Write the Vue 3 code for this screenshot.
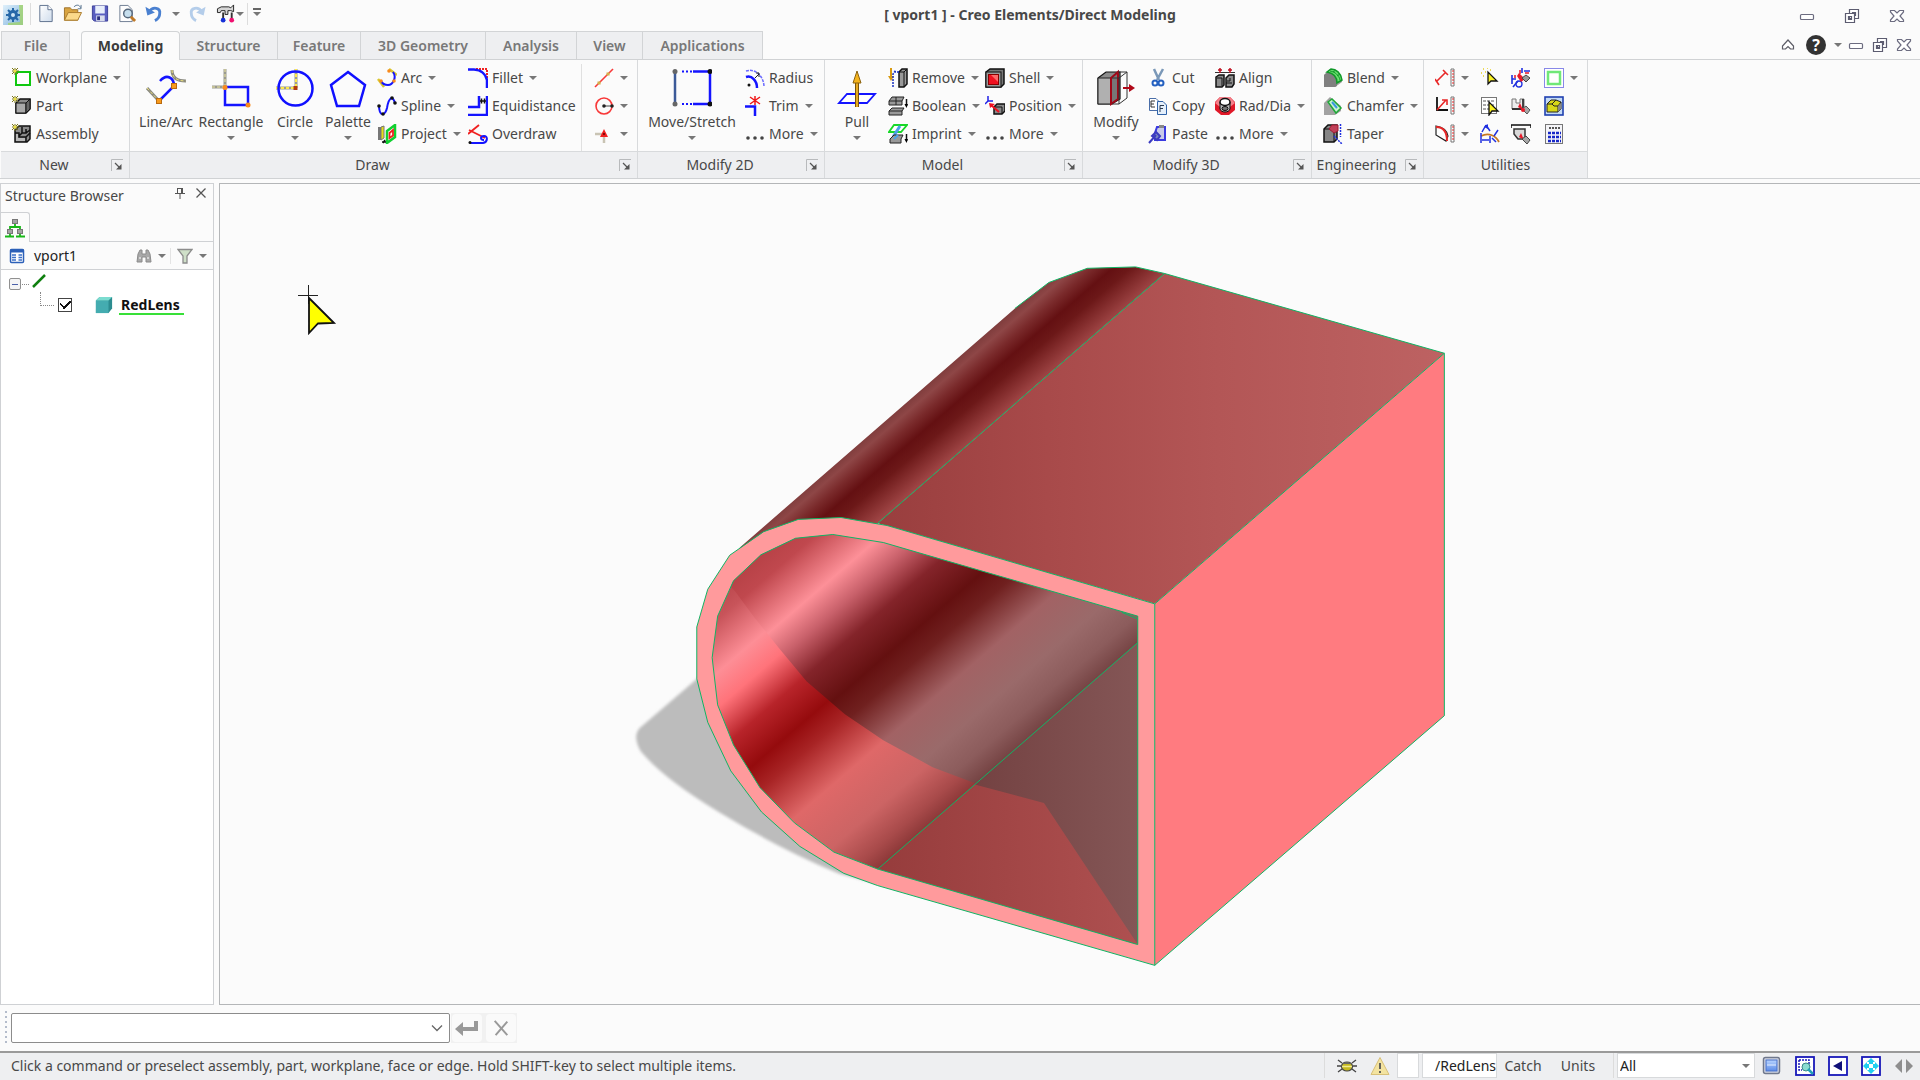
<script setup>
import { ref } from 'vue'

const tabs = ['Modeling', 'Structure', 'Feature', '3D Geometry', 'Analysis', 'View', 'Applications']
const activeTab = ref('Modeling')
const visible = ref(true)
const command = ref('')
const filter = ref('All')

const groups = [
  {
    id: 'new', label: 'New', launcher: true,
    parts: [
      { items: [
        { icon: 'workplane', text: 'Workplane', menu: true },
        { icon: 'part', text: 'Part' },
        { icon: 'assembly', text: 'Assembly' },
      ] },
    ],
  },
  {
    id: 'draw', label: 'Draw', launcher: true,
    parts: [
      { big: 'linearc', text: 'Line/Arc' },
      { big: 'rectangle', text: 'Rectangle', menu: true },
      { big: 'circle', text: 'Circle', menu: true },
      { big: 'palette', text: 'Palette', menu: true },
      { items: [
        { icon: 'arc', text: 'Arc', menu: true },
        { icon: 'spline', text: 'Spline', menu: true },
        { icon: 'project', text: 'Project', menu: true },
      ] },
      { items: [
        { icon: 'fillet', text: 'Fillet', menu: true },
        { icon: 'equi', text: 'Equidistance' },
        { icon: 'overdraw', text: 'Overdraw' },
      ] },
      { divided: true, items: [
        { icon: 'cline', name: 'Construction line', menu: true },
        { icon: 'ccircle', name: 'Construction circle', menu: true },
        { icon: 'cpoint', name: 'Construction point', menu: true },
      ] },
    ],
  },
  {
    id: 'mod2d', label: 'Modify 2D', launcher: true,
    parts: [
      { big: 'stretch', text: 'Move/Stretch', menu: true },
      { items: [
        { icon: 'radius', text: 'Radius' },
        { icon: 'trim', text: 'Trim', menu: true },
        { icon: 'more', text: 'More', menu: true },
      ] },
    ],
  },
  {
    id: 'model', label: 'Model', launcher: true,
    parts: [
      { big: 'pull', text: 'Pull', menu: true },
      { items: [
        { icon: 'remove', text: 'Remove', menu: true },
        { icon: 'boolean', text: 'Boolean', menu: true },
        { icon: 'imprint', text: 'Imprint', menu: true },
      ] },
      { items: [
        { icon: 'shell', text: 'Shell', menu: true },
        { icon: 'position', text: 'Position', menu: true },
        { icon: 'more', text: 'More', menu: true },
      ] },
    ],
  },
  {
    id: 'mod3d', label: 'Modify 3D', launcher: true,
    parts: [
      { big: 'modify', text: 'Modify', menu: true },
      { items: [
        { icon: 'cut', text: 'Cut' },
        { icon: 'copy', text: 'Copy' },
        { icon: 'paste', text: 'Paste' },
      ] },
      { items: [
        { icon: 'align', text: 'Align' },
        { icon: 'raddia', text: 'Rad/Dia', menu: true },
        { icon: 'more', text: 'More', menu: true },
      ] },
    ],
  },
  {
    id: 'eng', label: 'Engineering', launcher: true,
    parts: [
      { items: [
        { icon: 'blend', text: 'Blend', menu: true },
        { icon: 'chamfer', text: 'Chamfer', menu: true },
        { icon: 'taper', text: 'Taper' },
      ] },
    ],
  },
  {
    id: 'util', label: 'Utilities',
    parts: [
      { items: [
        { icon: 'mdist', name: 'Measure distance', menu: true },
        { icon: 'mangle', name: 'Measure angle', menu: true },
        { icon: 'mface', name: 'Measure face', menu: true },
      ] },
      { items: [
        { icon: 'select', name: 'Select' },
        { icon: 'selectlist', name: 'Select from list' },
        { icon: 'curvature', name: 'Curvature' },
      ] },
      { items: [
        { icon: 'check1', name: 'Check sketch' },
        { icon: 'check2', name: 'Check part' },
        { icon: 'check3', name: 'Check size' },
      ] },
      { items: [
        { icon: 'frame', name: 'Workplane display', menu: true },
        { icon: 'shaded', name: 'Shaded display' },
        { icon: 'calc', name: 'Calculator' },
      ] },
    ],
  },
]

const quick = [
  { icon: 'file', name: 'New' },
  { icon: 'open', name: 'Open' },
  { icon: 'save', name: 'Save' },
  { icon: 'preview', name: 'Preview' },
  { icon: 'undo', name: 'Undo', menu: true },
  { icon: 'redo', name: 'Redo' },
  { icon: 'hammer', name: 'Customize tools', menu: true },
]

const viewTools = [
  { icon: 'screen', name: 'Viewport' },
  { icon: 'zoomwin', name: 'Zoom window' },
  { icon: 'back', name: 'Previous view' },
  { icon: 'fit', name: 'Fit view' },
  { icon: 'split', name: 'Resize' },
]
</script>

<template>
  <div class="app">
    <svg class="sprite" aria-hidden="true">
      <defs>
        <linearGradient id="gBlue" x1="0" y1="0" x2="1" y2="1">
          <stop offset="0" stop-color="#dff0fb" /><stop offset="1" stop-color="#7fb2dd" />
        </linearGradient>
        <linearGradient id="gScreen" x1="0" y1="0" x2="0" y2="1">
          <stop offset="0" stop-color="#b8d4ff" /><stop offset="1" stop-color="#5b8be8" />
        </linearGradient>
        <linearGradient id="gPage" x1="0" y1="0" x2="1" y2="1">
          <stop offset="0" stop-color="#ffffff" /><stop offset="1" stop-color="#cfdcec" />
        </linearGradient>
      </defs>
      <symbol id="gear" viewBox="0 0 20 20">
        <path d="M0 0H20V20H0Z" fill="url(#gBlue)" /><path d="M16 0H20V20H5V18L17 17Z" fill="#a4d46c" opacity=".8" />
        <circle cx="10" cy="10" r="3.500" fill="#cfe6f6" stroke="#2668a8" stroke-width="3" />
        <path d="M10 3v3M10 14v3M3 10h3M14 10h3M5 5l2 2M13 13l2 2M15 5l-2 2M5 15l2-2" stroke="#2668a8" stroke-width="2" />
      </symbol>
      <symbol id="file" viewBox="0 0 20 20">
        <path d="M3.500 1.500H12L16.500 6V18.500H3.500Z" fill="url(#gPage)" stroke="#5c6f8c" /><path d="M12 1.500V6H16.500" fill="#fff" stroke="#5c6f8c" />
      </symbol>
      <symbol id="open" viewBox="0 0 20 20">
        <path d="M1 17V4H7L9 6H15V17Z" fill="#d9a441" stroke="#9c722a" /><path d="M1 17L5 9H19L15 17Z" fill="#fbd98a" stroke="#a9792b" />
        <path d="M11 3C14 0 17 1 18 4M18.500 1V5H15" fill="none" stroke="#5a7590" />
      </symbol>
      <symbol id="save" viewBox="0 0 20 20">
        <path d="M2 2H18V18H4L2 16Z" fill="#5a5ec0" stroke="#3a3e98" /><rect x="5" y="2" width="10" height="8" fill="#e8eefb" /><rect x="6" y="12" width="9" height="6" fill="#d8dcec" /><rect x="7" y="13" width="3" height="4" fill="#2c2f80" />
      </symbol>
      <symbol id="preview" viewBox="0 0 20 20">
        <path d="M2.500 1.500H11L15.500 6V18.500H2.500Z" fill="#fdfdfd" stroke="#6b7a90" /><circle cx="11" cy="10" r="4.500" fill="#bcd8ea" fill-opacity=".85" stroke="#55677c" stroke-width="1.500" /><path d="M14 13.500L18.500 18" stroke="#c07a28" stroke-width="3" />
      </symbol>
      <symbol id="undo" viewBox="0 0 20 20">
        <path d="M5 8C9 2 17 4 16 10C16 13 14 16 11 17.500" fill="none" stroke="#4a80d0" stroke-width="3" /><path d="M1 3L3 12L11 9Z" fill="#4a80d0" />
      </symbol>
      <symbol id="redo" viewBox="0 0 20 20">
        <path d="M15 8C11 2 3 4 4 10C4 13 6 16 9 17.500" fill="none" stroke="#b4cdea" stroke-width="3" /><path d="M19 3L17 12L9 9Z" fill="#b4cdea" />
      </symbol>
      <symbol id="hammer" viewBox="0 0 20 20">
        <path d="M1 5L5 3H13L15 4L18 1V8L15 7H12V11H9V7H5L4 9H1Z" fill="#d6d6d6" stroke="#222" /><path d="M7 9V15M16 9V15" stroke="#333" stroke-width="2" /><circle cx="7" cy="17" r="2.500" fill="#1530d8" /><circle cx="16" cy="17" r="2.500" fill="#f01070" />
      </symbol>

      <symbol id="workplane" viewBox="0 0 20 20">
        <rect x="4" y="4" width="14" height="13" fill="#fff" stroke="#10c810" stroke-width="2" /><path d="M3 0V7M0 3H7M0 0L6 6M6 0L0 6" stroke="#7a7418" /><circle cx="3" cy="3" r="1.500" fill="#ece040" />
      </symbol>
      <symbol id="part" viewBox="0 0 20 20">
        <path d="M4 7L8 3H18V13L14 17H4Z" fill="#8a8a8a" stroke="#111" stroke-width="1.500" /><path d="M4 7H14V17H4Z" fill="#a9a9a9" stroke="#111" /><path d="M14 7L18 3V13L14 17Z" fill="#666" stroke="#111" /><path d="M3 0V7M0 3H7M0 0L6 6M6 0L0 6" stroke="#7a7418" /><circle cx="3" cy="3" r="1.500" fill="#ece040" />
      </symbol>
      <symbol id="assembly" viewBox="0 0 20 20">
        <path d="M3 6L7 2H18V15L15 18H3Z" fill="#8a8a8a" stroke="#111" stroke-width="1.500" /><path d="M3 9H7V13H14V18M10 3V9H14V5M10 9L7 12M14 9L18 6M14 13L18 9" fill="none" stroke="#111" stroke-width="1.500" /><path d="M4 10H6V14H13V17H4Z" fill="#b8b8b8" /><path d="M3 0V7M0 3H7M0 0L6 6M6 0L0 6" stroke="#7a7418" /><circle cx="3" cy="3" r="1.500" fill="#ece040" />
      </symbol>
      <symbol id="linearc" viewBox="0 0 40 40">
        <path d="M1 20L13 33M26 2C26 9 30 13 40 13" fill="none" stroke="#8a8a80" stroke-width="3" /><path d="M1 20L13 33M26 2C26 9 30 13 40 13" fill="none" stroke="#efe27a" stroke-dasharray="3 2" /><path d="M13 33L28 18C28 10 21 5 14 13" fill="none" stroke="#1414ff" stroke-width="2.500" /><rect x="10.500" y="30.500" width="5" height="5" fill="#f79a1c" stroke="#b96a10" /><rect x="25.500" y="15.500" width="5" height="5" fill="#f79a1c" stroke="#b96a10" />
      </symbol>
      <symbol id="rectangle" viewBox="0 0 40 40">
        <path d="M14 1V19M1 19H14" stroke="#9a9a90" stroke-width="3" /><path d="M14 1V19M1 19H14" stroke="#efe9a0" stroke-dasharray="3 2" /><rect x="14" y="19" width="23" height="18" fill="none" stroke="#1414ff" stroke-width="2.500" /><circle cx="14" cy="19.500" r="2.500" fill="#f98a1c" /><circle cx="37" cy="37" r="2.500" fill="#f98a1c" />
      </symbol>
      <symbol id="circle" viewBox="0 0 40 40">
        <path d="M21 1V20M1 20H21" stroke="#9a9a90" stroke-width="3" /><path d="M21 1V20M1 20H21" stroke="#ffe94a" stroke-width="2" stroke-dasharray="3 2" /><circle cx="20.500" cy="20.500" r="17" fill="none" stroke="#1010ff" stroke-width="2.500" /><rect x="18.500" y="18" width="4" height="4" fill="#b03a10" />
      </symbol>
      <symbol id="palette" viewBox="0 0 40 40">
        <path d="M20 4L37 17L31 38H9L3 17Z" fill="none" stroke="#1010ff" stroke-width="2.500" />
      </symbol>
      <symbol id="arc" viewBox="0 0 20 20">
        <path d="M12 1L20 7M1 11L7 19" stroke="#d8c830" stroke-width="2.500" /><path d="M16 4C20 9 16 17 11 17C7 17 5 15 4 13" fill="none" stroke="#1414ff" stroke-width="2" /><g fill="#f98a1c"><circle cx="12" cy="3" r="1.800" /><circle cx="4" cy="13" r="1.800" /><circle cx="17" cy="13" r="1.800" /></g>
      </symbol>
      <symbol id="spline" viewBox="0 0 20 20">
        <path d="M2 9C2 21 8 20 10 12C12 0 16 0 18 7" fill="none" stroke="#1414ff" stroke-width="2" /><g fill="#111"><circle cx="2" cy="10" r="1.800" /><circle cx="6" cy="18" r="1.800" /><circle cx="15" cy="2" r="1.800" /><circle cx="18" cy="7" r="1.800" /></g>
      </symbol>
      <symbol id="project" viewBox="0 0 20 20">
        <path d="M1 3H4V16H1Z" fill="#777" /><path d="M4 3L7 2V14L4 16Z" fill="#e6dd18" stroke="#777" /><path d="M10 7L18 1V13L10 19Z" fill="#fff" stroke="#10d030" stroke-width="2.500" /><path d="M12.500 9L16 6V11.500L12.500 14Z" fill="none" stroke="#f02020" stroke-width="1.800" /><path d="M5 18H9M8 16L6 19" stroke="#111" stroke-width="1.500" />
      </symbol>
      <symbol id="fillet" viewBox="0 0 20 20">
        <path d="M8 1H19V11" fill="none" stroke="#f02020" stroke-width="2" stroke-dasharray="2 1" /><path d="M0 1.500H6C14 2 18 7 19 12V20" fill="none" stroke="#1414ff" stroke-width="2.500" />
      </symbol>
      <symbol id="equi" viewBox="0 0 20 20">
        <path d="M0 11H11V0M0 19H19V0" fill="none" stroke="#1414ff" stroke-width="2.500" /><path d="M12 5H18M13.500 2.500V7.500M16.500 2.500V7.500" stroke="#111" stroke-width="1.500" />
      </symbol>
      <symbol id="overdraw" viewBox="0 0 20 20">
        <path d="M0 10L11 1M1 6L17 14" stroke="#f02020" stroke-width="1.800" /><path d="M2 19H15C20 18 20 12 16 12C12 12 12 16 16 16" fill="none" stroke="#1414ff" stroke-width="2" /><circle cx="2" cy="18.500" r="1.500" fill="#111" />
      </symbol>
      <symbol id="cline" viewBox="0 0 20 20">
        <path d="M1 19L19 1" stroke="#f83838" stroke-width="1.600" /><path d="M5 15h.1M14 6h.1" stroke="#d2b04a" stroke-width="3" stroke-linecap="square" />
      </symbol>
      <symbol id="ccircle" viewBox="0 0 20 20">
        <circle cx="10" cy="10" r="8" fill="none" stroke="#f83838" stroke-width="1.600" /><path d="M10 10H18" stroke="#444" /><circle cx="10" cy="10" r="1.800" fill="#222" /><circle cx="18" cy="10" r="1.800" fill="#222" />
      </symbol>
      <symbol id="cpoint" viewBox="0 0 20 20">
        <path d="M1 10H10V19" fill="none" stroke="#c9c4b4" stroke-width="2.500" /><path d="M10 5L14 13H6Z" fill="#f02020" /><circle cx="10" cy="10" r="1" fill="#600" />
      </symbol>
      <symbol id="stretch" viewBox="0 0 40 40">
        <path d="M3 4V36" stroke="#3c5a98" stroke-width="2.500" /><path d="M10 3.500H22M10 36H22" stroke="#1414ff" stroke-width="2" stroke-dasharray="2 2" /><path d="M21 3.500H38V36H21" fill="none" stroke="#1414ff" stroke-width="2.500" /><circle cx="3" cy="3.500" r="2.500" fill="#666" /><circle cx="3" cy="36" r="2.500" fill="#666" /><circle cx="38" cy="3.500" r="2.500" fill="#111" /><circle cx="38" cy="36" r="2.500" fill="#111" />
      </symbol>
      <symbol id="radius" viewBox="0 0 20 20">
        <path d="M1 3C10 0 19 8 19 19" fill="none" stroke="#6a6aff" stroke-width="1.500" stroke-dasharray="3 1" /><path d="M1 9C7 7 12 13 12 20" fill="none" stroke="#1414ff" stroke-width="2.500" /><circle cx="4" cy="17" r="1.500" fill="#111" /><path d="M10 10L14 6M14 9V5H11" stroke="#222" fill="none" />
      </symbol>
      <symbol id="trim" viewBox="0 0 20 20">
        <path d="M0 10.500H10V20" fill="none" stroke="#1414ff" stroke-width="2.500" /><path d="M10 0V9M5 1L15 8M15 1L5 8" stroke="#f01818" stroke-width="1.500" />
      </symbol>
      <symbol id="more" viewBox="0 0 20 20">
        <g fill="#444"><circle cx="3" cy="14" r="1.800" /><circle cx="10" cy="14" r="1.800" /><circle cx="17" cy="14" r="1.800" /></g>
      </symbol>
      <symbol id="pull" viewBox="0 0 40 40">
        <path d="M10 26H38L30 35H2Z" fill="#fff" stroke="#1414ff" stroke-width="1.800" /><path d="M20 14V39" stroke="#7a5408" stroke-width="4" /><path d="M20 14V39" stroke="#e8aa20" stroke-width="2" /><path d="M20 3L24 15H16Z" fill="#f5b41c" stroke="#8a6210" />
      </symbol>
      <symbol id="remove" viewBox="0 0 20 20">
        <path d="M3 0V11" stroke="#d89a10" stroke-width="2" /><path d="M0 8H6L3 13Z" fill="#d89a10" /><path d="M11 4L14 1H19V16L16 19H11Z" fill="#999" stroke="#111" stroke-width="1.500" /><path d="M11 4H16V19M16 4L19 1" fill="none" stroke="#111" /><path d="M5 19V6L8 2M11 4H6" stroke="#1830c0" fill="none" stroke-dasharray="2 1" stroke-width="1.500" />
      </symbol>
      <symbol id="boolean" viewBox="0 0 20 20">
        <path d="M1 5L4 1H16L14 5V9H1Z" fill="#999" stroke="#222" /><path d="M1 5H14M8 1V9" stroke="#222" /><path d="M1 15L4 12H16L14 15V19H1Z" fill="#999" stroke="#222" /><path d="M1 15H14" stroke="#222" /><path d="M18.500 3V10" stroke="#111" stroke-width="1.500" /><path d="M16.500 8H20L18.500 12Z" />
      </symbol>
      <symbol id="imprint" viewBox="0 0 20 20">
        <path d="M6 1H19L13 8H1Z" fill="#fff" stroke="#18d828" stroke-width="1.800" /><path d="M12 2L5 13" stroke="#4aa0e8" stroke-width="3" /><path d="M2 15L6 11H15L13 15V19H2Z" fill="#999" stroke="#222" /><path d="M10 11L6 15" stroke="#4aa0e8" stroke-width="2" /><path d="M18.500 10V17" stroke="#111" stroke-width="1.500" /><path d="M16.500 15H20L18.500 19Z" />
      </symbol>
      <symbol id="shell" viewBox="0 0 20 20">
        <path d="M1 4L5 1H19V16L16 19H1Z" fill="#777" stroke="#111" stroke-width="1.500" /><rect x="1" y="4" width="15" height="15" fill="#9a9a9a" stroke="#111" /><rect x="3.500" y="6.500" width="10" height="10" fill="#f01020" stroke="#800" /><path d="M6 7H13V14Z" fill="#ff6868" />
      </symbol>
      <symbol id="position" viewBox="0 0 20 20">
        <path d="M3 0V5L0 8M3 5H8" fill="none" stroke="#2020e8" stroke-width="1.500" /><path d="M9 11L12 8H20V15L17 18H9Z" fill="#888" stroke="#111" stroke-width="1.500" /><path d="M9 11H17V18" fill="none" stroke="#111" /><path d="M14 16L6 9" stroke="#f01020" stroke-width="2" /><path d="M4 7L10 8L5 12Z" fill="#f01020" />
      </symbol>
      <symbol id="modify" viewBox="0 0 40 40">
        <path d="M2 10L10 4H24V31L16 36H2Z" fill="#8c8c8c" stroke="#111" stroke-width="1.200" /><path d="M2 10H15V36H2Z" fill="#b0b0b0" stroke="#222" /><path d="M15 10L22 4V31L15 36Z" fill="#777" stroke="#a00818" stroke-width="2" /><path d="M16 10H23L31 4V30L23 36H16M23 10V36M22 4H31" fill="none" stroke="#333" /><path d="M27 20H35" stroke="#b00818" stroke-width="2" /><path d="M33 16L39 20L33 24Z" fill="#b00818" />
      </symbol>
      <symbol id="cut" viewBox="0 0 20 20">
        <path d="M6 1L11 12M15 1L9 12" stroke="#7a98b8" stroke-width="2.500" /><circle cx="7" cy="15" r="2.500" fill="none" stroke="#2460c0" stroke-width="2" /><circle cx="13" cy="15" r="2.500" fill="none" stroke="#2460c0" stroke-width="2" />
      </symbol>
      <symbol id="copy" viewBox="0 0 20 20">
        <path d="M1.500 2.500H8L10.500 5V14.500H1.500Z" fill="#fff" stroke="#4a6ea8" /><path d="M3 5H7M3 8H6M3 5V11H7" stroke="#333" fill="none" /><path d="M9.500 5.500H15L18.500 9V18.500H9.500Z" fill="#e4effb" stroke="#2f62a8" /><path d="M12 9.500H16M12 12.500H15M12 9.500V16" stroke="#2a3a50" fill="none" />
      </symbol>
      <symbol id="paste" viewBox="0 0 20 20">
        <path d="M9 3H17V16H7V9Z" fill="#c9cbe8" stroke="#3a3ae0" stroke-width="2" /><rect x="11" y="1" width="5" height="3" fill="#888" /><path d="M1 19L8 11M4 12L8 8L12 12L9 16Z" stroke="#3a3ac0" stroke-width="2" fill="#7a88c0" />
      </symbol>
      <symbol id="align" viewBox="0 0 20 20">
        <path d="M0 4.500H20" stroke="#333" /><path d="M5 0V5M3 2H7M15 0V5M13 2H17" stroke="#c01020" stroke-width="1.500" /><path d="M1 9L4 7H9V17L7 19H1Z" fill="#8a8a8a" stroke="#111" stroke-width="1.500" /><path d="M11 10L14 7H19V16L17 19H11Z" fill="#8a8a8a" stroke="#111" stroke-width="1.500" /><path d="M2 10H7V18M12 13H15V10M11 15H17" fill="none" stroke="#111" />
      </symbol>
      <symbol id="raddia" viewBox="0 0 20 20">
        <path d="M0 6L5 1H15L20 6V14L14 19H6L0 14Z" fill="#e01828" /><path d="M0 7L5 1H15L20 7L15 11H5Z" fill="#f4808a" /><path d="M5 6V13C6 17 14 17 15 13V6Z" fill="#b8b8b8" stroke="#111" /><ellipse cx="10" cy="6" rx="5" ry="3.500" fill="#fff" stroke="#111" stroke-width="1.500" /><ellipse cx="10" cy="12.500" rx="3" ry="2" fill="#777" stroke="#111" />
      </symbol>
      <symbol id="blend" viewBox="0 0 20 20">
        <path d="M1 7L7 1L19 9V14L12 19H1Z" fill="#9c9c9c" /><path d="M1 7L5 4C11 5 14 9 14 18L12 19H1Z" fill="#808080" /><path d="M4 4C10 5 14 8 14 15L19 12C18 5 13 1 8 1Z" fill="#6ce070" stroke="#109828" stroke-width="1.500" /><path d="M7 3C12 4 16 7 17 12M10 4L13 2M14 8L17 6" fill="none" stroke="#109828" />
      </symbol>
      <symbol id="chamfer" viewBox="0 0 20 20">
        <path d="M1 7L7 1L18 10V15L12 19H1Z" fill="#a2a2a2" /><path d="M5 6L9 3L18 12L13 17Z" fill="#c8f4d0" stroke="#20a838" stroke-width="1.500" /><path d="M9 6L14 12" stroke="#3a98e0" stroke-width="2" />
      </symbol>
      <symbol id="taper" viewBox="0 0 20 20">
        <path d="M1 5L5 1H14V15L11 18H1Z" fill="#858585" stroke="#111" stroke-width="1.500" /><path d="M1 5H11V18" fill="none" stroke="#111" /><path d="M6 5L9 1H15V7L11 9Z" fill="#c04058" stroke="#a01830" /><path d="M17.500 0V13M11 12L19 20" stroke="#2030e0" stroke-width="1.500" stroke-dasharray="2 1" />
      </symbol>
      <symbol id="mdist" viewBox="0 0 20 20">
        <path d="M1 14L11 4M0 11L4 17M8 2L13 7" stroke="#e82828" stroke-width="1.600" /><path d="M16 1H19V18H16Z" fill="#fff" stroke="#777" /><path d="M17 3H19M17 6H19M17 9H19M17 12H19M17 15H19" stroke="#e82828" />
      </symbol>
      <symbol id="mangle" viewBox="0 0 20 20">
        <path d="M2 1V14H13" fill="none" stroke="#111" stroke-width="1.800" /><path d="M2 14L11 4M7 4H12V9" fill="none" stroke="#e82828" stroke-width="1.600" /><path d="M16 1H19V18H16Z" fill="#fff" stroke="#777" /><path d="M17 3H19M17 6H19M17 9H19M17 12H19M17 15H19" stroke="#e82828" />
      </symbol>
      <symbol id="mface" viewBox="0 0 20 20">
        <path d="M1 2V11L11 17L13 12C12 6 8 3 1 2Z" fill="#fff" stroke="#222" stroke-width="1.200" /><path d="M1 3C8 3 12 8 12 17" fill="none" stroke="#e82828" stroke-width="2" /><path d="M16 1H19V18H16Z" fill="#fff" stroke="#777" /><path d="M17 3H19M17 6H19M17 9H19M17 12H19M17 15H19" stroke="#e82828" />
      </symbol>
      <symbol id="select" viewBox="0 0 20 20">
        <path d="M8 4V16L11 13H17Z" fill="#f8f020" stroke="#111" stroke-width="1.300" /><path d="M3 1h1M7 0h1M1 5h1M10 2h1M3 8h1M5 4h1" stroke="#e8d020" stroke-width="1.600" />
      </symbol>
      <symbol id="selectlist" viewBox="0 0 20 20">
        <rect x="1.500" y="1.500" width="15" height="16" fill="#fff" stroke="#777" /><path d="M3 5H15M3 9H15M3 13H15" stroke="#aaa" stroke-width="2" stroke-dasharray="3 1" /><path d="M9 6V19L12 15H18Z" fill="#f8f020" stroke="#111" stroke-width="1.300" />
      </symbol>
      <symbol id="curvature" viewBox="0 0 20 20">
        <path d="M1 12C9 8 16 12 19 18" fill="none" stroke="#c87820" stroke-width="1.800" /><path d="M1 9V19M10 12V19M2 16H9M6 1L2 8M6 1L10 7M14 12L18 6M12 14L16 18" fill="none" stroke="#2030e0" stroke-width="1.500" /><path d="M4 3L8 0V5Z" fill="#2030e0" />
      </symbol>
      <symbol id="check1" viewBox="0 0 20 20">
        <path d="M1 7V16M1 11H5M11 0V5M13 3H19M2 19L7 13" fill="none" stroke="#2030e0" stroke-width="1.600" /><circle cx="8" cy="16" r="3" fill="none" stroke="#2030e0" stroke-width="1.300" /><path d="M8 5L6 8L10 14L14 11Z" fill="#e81828" /><path d="M11 10L15 7L19 10L15 14Z" fill="#9a9a9a" stroke="#444" /><path d="M9 2V6M14 5H18M4 7V10" stroke="#e81828" stroke-width="1.500" />
      </symbol>
      <symbol id="check2" viewBox="0 0 20 20">
        <path d="M1 3H5V7H9V3H13V13H1Z" fill="#ececec" stroke="#777" /><path d="M1 13H12V3" fill="none" stroke="#333" stroke-width="1.800" /><path d="M9 7L7 11L12 14Z" fill="#e81828" /><path d="M11 13L15 10L19 14L16 18Z" fill="#a8a8a8" stroke="#555" /><circle cx="12" cy="14" r="2" fill="#e81828" />
      </symbol>
      <symbol id="check3" viewBox="0 0 20 20">
        <path d="M0 4V1H20V4" fill="none" stroke="#111" stroke-width="1.500" /><path d="M3 5H14V15H7L3 10Z" fill="#d8d8d8" stroke="#333" stroke-width="1.500" /><path d="M10 9L8 13L13 16Z" fill="#e81828" /><path d="M11 15L15 12L19 16L16 20Z" fill="#a8a8a8" stroke="#444" />
      </symbol>
      <symbol id="frame" viewBox="0 0 20 20">
        <rect x=".5" y=".5" width="19" height="19" fill="#fff" stroke="#8888e8" /><rect x="4" y="4" width="12" height="12" fill="#fff" stroke="#70e878" stroke-width="2.500" />
      </symbol>
      <symbol id="shaded" viewBox="0 0 20 20">
        <rect x="1" y="1" width="18" height="18" fill="#c4daf4" stroke="#2040b0" stroke-width="1.600" /><path d="M3 8L7 4H12L17 6V13L14 16H3Z" fill="#d8d818" stroke="#222" /><path d="M3 8H8L10 10H14V16M8 8L12 4M14 10L17 6" fill="none" stroke="#222" /><path d="M14 10L17 7V13L14 16Z" fill="#888" />
      </symbol>
      <symbol id="calc" viewBox="0 0 20 20">
        <rect x="1.500" y=".5" width="17" height="19" fill="#f4f4f8" stroke="#777" /><path d="M5 4H16" stroke="#555" stroke-width="2" stroke-dasharray="2 1" /><path d="M4 9H17M4 13H17M4 17H17" stroke="#1828c8" stroke-width="2.500" stroke-dasharray="3 1" />
      </symbol>

      <symbol id="min" viewBox="0 0 16 16"><rect x="1.500" y="6.500" width="13" height="5" rx="1" fill="#fff" stroke="#6c6c80" stroke-width="1.200" /></symbol>
      <symbol id="restore" viewBox="0 0 16 16"><path d="M5.500 1.500H14.500V10.500H5.500ZM8.500 4.500H11.500V7.500H8.500Z" fill="#fff" fill-rule="evenodd" stroke="#5c5c70" stroke-width="1.200" /><path d="M1.500 5.500H10.500V14.500H1.500ZM4.500 8.500H7.500V11.500H4.500Z" fill="#fff" fill-rule="evenodd" stroke="#5c5c70" stroke-width="1.200" /></symbol>
      <symbol id="close" viewBox="0 0 16 16"><path d="M1.500 2.500H5.500L8 5L10.500 2.500H14.500V4L11 8L14.500 12V13.500H10.500L8 11L5.500 13.500H1.500V12L5 8L1.500 4Z" fill="#fff" stroke="#6c6c80" stroke-width="1.200" /></symbol>
      <symbol id="up" viewBox="0 0 16 16"><path d="M8 3L13.500 9V12H10.500L8 9.500L5.500 12H2.500V9Z" fill="#fff" stroke="#5c5c66" stroke-width="1.200" /></symbol>

      <symbol id="pin" viewBox="0 0 12 12"><path d="M3.500 1V6.500M8.500 1V6.500M7.500 1V6.500M3 1.500H9M1 6.500H11M6 7V12" stroke="#555" fill="none" /></symbol>
      <symbol id="x" viewBox="0 0 12 12"><path d="M1.500 1.500L10.500 10.500M10.500 1.500L1.500 10.500" stroke="#555" stroke-width="1.300" /></symbol>
      <symbol id="tree" viewBox="0 0 20 20">
        <path d="M10 6V9M5 12V9H15V12M5 16V18M15 16V18M0 18.500H9M11 18.500H20" fill="none" stroke="#18b818" stroke-width="1.800" /><g fill="#a4a4a4" stroke="#777"><rect x="7.500" y="1.500" width="5" height="4" /><rect x="2.500" y="11.500" width="5" height="4" /><rect x="12.500" y="11.500" width="5" height="4" /></g>
      </symbol>
      <symbol id="browser" viewBox="0 0 16 16">
        <rect x="1.500" y="1.500" width="13" height="13" rx="1" fill="#fff" stroke="#2c60b8" stroke-width="1.500" /><path d="M1 3H15" stroke="#2c60b8" stroke-width="3" /><path d="M3 7H7M3 9.500H7M3 12H7M9.500 7H13M9.500 9.500H13M9.500 12H13" stroke="#3c70c8" stroke-width="1.500" />
      </symbol>
      <symbol id="find" viewBox="0 0 16 16">
        <path d="M2 6L4 2H6V6H10V2H12L14 6L15 14H10V9H6V14H1Z" fill="#a8a8a8" stroke="#8a8a8a" /><path d="M3 10H5M11 10H13" stroke="#fff" />
      </symbol>
      <symbol id="funnel" viewBox="0 0 16 16"><path d="M1 1.500H15L10 8V15H6V8Z" fill="#cfe0c8" stroke="#8c8c8c" stroke-width="1.300" /></symbol>
      <symbol id="bug" viewBox="0 0 20 20">
        <path d="M1 4L5 7M19 4L15 7M0 10H4M20 10H16M1 16L5 13M19 16L15 13" stroke="#444" stroke-width="1.300" /><ellipse cx="10" cy="10.500" rx="5.500" ry="4.500" fill="#c4b820" stroke="#444" stroke-width="1.200" /><path d="M5 8Q10 4 15 8Z" fill="#666" /><path d="M5 10.500H15" stroke="#f0ec90" stroke-width="1.500" />
      </symbol>
      <symbol id="warn" viewBox="0 0 20 20"><path d="M10 1.500L19 18.500H1Z" fill="#f3e3a0" stroke="#d8c078" stroke-linejoin="round" /><path d="M10 7V13M10 15V17" stroke="#555" stroke-width="1.800" /></symbol>
      <symbol id="screen" viewBox="0 0 20 20"><rect x="1.500" y="1.500" width="16" height="16" rx="2" fill="#d4d8e4" stroke="#70788c" stroke-width="1.500" /><rect x="4" y="4" width="11" height="11" fill="url(#gScreen)" stroke="#4870c8" /><path d="M5 9H14" stroke="#e8f0ff" /></symbol>
      <symbol id="zoomwin" viewBox="0 0 20 20"><rect x="1" y="1" width="18" height="18" fill="#fff" stroke="#1818b8" stroke-width="1.800" /><path d="M4 4H14V9M4 4V14H7" fill="none" stroke="#1818b8" stroke-width="1.500" stroke-dasharray="2 1" /><circle cx="11" cy="11" r="4" fill="#8adcd0" stroke="#388888" /><path d="M13 13L18 18" stroke="#20a0b8" stroke-width="2.500" /></symbol>
      <symbol id="back" viewBox="0 0 20 20"><rect x="1" y="1" width="18" height="18" fill="#fff" stroke="#1818b8" stroke-width="1.800" /><path d="M14 5V15L5 10Z" fill="#101078" /></symbol>
      <symbol id="fit" viewBox="0 0 20 20"><rect x="1" y="1" width="18" height="18" fill="#fff" stroke="#1818b8" stroke-width="1.800" /><g fill="#20d0f0"><path d="M10 2L14 6H12V8H8V6H6Z" /><path d="M10 18L14 14H12V12H8V14H6Z" /><path d="M2 10L6 6V8H8V12H6V14Z" /><path d="M18 10L14 6V8H12V12H14V14Z" /></g></symbol>
      <symbol id="split" viewBox="0 0 20 20"><path d="M8 3V17L1 10ZM12 3V17L19 10Z" fill="#8e8e8e" /></symbol>
      <symbol id="enter" viewBox="0 0 26 20"><path d="M1 11L9 4V9H20V3H24V13H9V18Z" fill="#999" /></symbol>
      <symbol id="cancel" viewBox="0 0 20 20"><path d="M3 2L17 18M17 3L4 18" stroke="#999" stroke-width="2.200" /></symbol>
      <symbol id="launch" viewBox="0 0 12 12"><path d="M.5 12V.5H12" fill="none" stroke="#b8babc" /><path d="M4 4L9 9" stroke="#555" stroke-width="1.300" /><path d="M10.500 5V10.500H5Z" fill="#555" /></symbol>
      <symbol id="cube" viewBox="0 0 20 20"><path d="M1 5L5 1H19V14L15 19H1Z" fill="#2c8c90" /><path d="M1 5H15V19H1Z" fill="#44acb0" /><path d="M1 5L5 1H19L15 5Z" fill="#7cdcd0" /></symbol>
    </svg>

    <header class="titlebar">
      <svg class="ic logo"><use href="#gear" /></svg>
      <nav class="quick" aria-label="Quick access">
        <button v-for="q in quick" :key="q.icon" :class="{ wide: q.menu }" :aria-label="q.name">
          <svg class="ic"><use :href="'#' + q.icon" /></svg>
          <i v-if="q.menu" class="caret"></i>
        </button>
        <button class="custom" aria-label="Customize toolbar"><i class="caret"></i></button>
      </nav>
      <h1>[ vport1 ] - Creo Elements/Direct Modeling</h1>
      <div class="winctl">
        <button aria-label="Minimize"><svg><use href="#min" /></svg></button>
        <button aria-label="Restore"><svg><use href="#restore" /></svg></button>
        <button aria-label="Close"><svg><use href="#close" /></svg></button>
      </div>
    </header>

    <nav class="tabs">
      <button class="tab file">File</button>
      <button v-for="t in tabs" :key="t" class="tab" :class="{ active: t === activeTab }" @click="activeTab = t">{{ t }}</button>
      <div class="docctl">
        <button aria-label="Collapse ribbon"><svg><use href="#up" /></svg></button>
        <button class="help" aria-label="Help">?</button>
        <i class="caret"></i>
        <button aria-label="Minimize viewport"><svg><use href="#min" /></svg></button>
        <button aria-label="Restore viewport"><svg><use href="#restore" /></svg></button>
        <button aria-label="Close viewport"><svg><use href="#close" /></svg></button>
      </div>
    </nav>

    <section class="ribbon">
      <div v-for="g in groups" :key="g.id" class="group" :class="g.id">
        <div class="body">
          <template v-for="(p, i) in g.parts" :key="i">
            <button v-if="p.big" class="big">
              <svg><use :href="'#' + p.big" /></svg>
              <span>{{ p.text }}</span>
              <i v-if="p.menu" class="caret"></i>
            </button>
            <div v-else class="stack" :class="{ divided: p.divided }">
              <button v-for="c in p.items" :key="c.icon" class="cmd" :aria-label="c.text || c.name">
                <svg class="ic"><use :href="'#' + c.icon" /></svg>
                <span v-if="c.text">{{ c.text }}</span>
                <i v-if="c.menu" class="caret"></i>
              </button>
            </div>
          </template>
        </div>
        <footer>
          <span>{{ g.label }}</span>
          <button v-if="g.launcher" :aria-label="g.label + ' options'"><svg><use href="#launch" /></svg></button>
        </footer>
      </div>
    </section>

    <main class="work">
      <aside class="browser">
        <div class="phead">
          <h2>Structure Browser</h2>
          <button aria-label="Pin"><svg><use href="#pin" /></svg></button>
          <button aria-label="Close panel"><svg><use href="#x" /></svg></button>
        </div>
        <div class="ptabs"><button aria-label="Structure"><svg class="ic"><use href="#tree" /></svg></button></div>
        <div class="ptools">
          <svg><use href="#browser" /></svg>
          <span>vport1</span>
          <button aria-label="Find"><svg><use href="#find" /></svg><i class="caret"></i></button>
          <button class="filter" aria-label="Filter"><svg><use href="#funnel" /></svg><i class="caret"></i></button>
        </div>
        <div class="tree">
          <div class="root">
            <button aria-label="Collapse"></button><i class="dots"></i>
            <svg viewBox="0 0 14 14"><path d="M1 13L13 1" stroke="#108010" stroke-width="2.500" /></svg>
          </div>
          <label class="leaf">
            <i class="elbow"></i>
            <input v-model="visible" type="checkbox">
            <svg><use href="#cube" /></svg>
            <span>RedLens</span>
          </label>
        </div>
      </aside>

      <section class="viewport">
        <svg class="solid" viewBox="0 0 1568 1568" preserveAspectRatio="none" role="img" aria-label="RedLens">
          <defs>
            <linearGradient id="top" gradientUnits="userSpaceOnUse" x1="470" y1="0" x2="1503" y2="0">
              <stop offset="0" stop-color="#993e3e" /><stop offset=".3" stop-color="#a84a4a" /><stop offset=".6" stop-color="#b35656" /><stop offset="1" stop-color="#bd6262" />
            </linearGradient>
            <linearGradient id="roll" gradientUnits="userSpaceOnUse" x1="432" y1="432" x2="534" y2="534">
              <stop offset="0" stop-color="#7e3c3c" /><stop offset=".12" stop-color="#8e4646" /><stop offset=".28" stop-color="#7a2a2b" /><stop offset=".46" stop-color="#641012" /><stop offset=".62" stop-color="#6c1818" /><stop offset="1" stop-color="#a04646" />
            </linearGradient>
            <linearGradient id="lit" gradientUnits="userSpaceOnUse" x1="435" y1="435" x2="902" y2="902">
              <stop offset="0" stop-color="#b03c40" /><stop offset=".12" stop-color="#c8545a" /><stop offset=".24" stop-color="#fd8e96" /><stop offset=".32" stop-color="#ff737a" /><stop offset=".42" stop-color="#b8242a" /><stop offset=".52" stop-color="#950b0d" /><stop offset=".59" stop-color="#a82425" /><stop offset=".72" stop-color="#df6868" /><stop offset=".86" stop-color="#cc6464" /><stop offset=".95" stop-color="#a84a4a" /><stop offset="1" stop-color="#8c3838" />
            </linearGradient>
            <linearGradient id="dim" gradientUnits="userSpaceOnUse" x1="435" y1="435" x2="902" y2="902">
              <stop offset="0" stop-color="#b03c40" /><stop offset=".12" stop-color="#c0484e" /><stop offset=".25" stop-color="#fd9098" /><stop offset=".33" stop-color="#c8606a" /><stop offset=".42" stop-color="#84242a" /><stop offset=".53" stop-color="#641010" /><stop offset=".6" stop-color="#70201f" /><stop offset=".72" stop-color="#a26264" /><stop offset=".84" stop-color="#9a6a6a" /><stop offset=".93" stop-color="#8c5c5c" /><stop offset="1" stop-color="#744242" />
            </linearGradient>
            <linearGradient id="floor" gradientUnits="userSpaceOnUse" x1="470" y1="0" x2="944" y2="0">
              <stop offset="0" stop-color="#963c3c" /><stop offset="1" stop-color="#ae5050" />
            </linearGradient>
            <linearGradient id="floorDim" gradientUnits="userSpaceOnUse" x1="650" y1="0" x2="944" y2="0">
              <stop offset="0" stop-color="#744242" /><stop offset="1" stop-color="#845656" />
            </linearGradient>
            <clipPath id="bore"><path d="M944 797L480 641L388 624L320 632L257 667L207 722L178 797L168 885L178 985L207 1070L255 1160L318 1235L390 1297L470 1333L944 1493Z" /></clipPath>
            <filter id="soft"><feGaussianBlur stdDeviation="3" /></filter>
          </defs>
          <path d="M150 920L36 1034Q22 1052 38 1084Q80 1142 180 1212Q290 1290 400 1343L470 1364L500 1200Z" fill="#bcbcbc" filter="url(#soft)" />
          <path d="M993 71L940 57L852 60L782 90L720 145L218 652L262 680H470V600Z" fill="url(#roll)" />
          <path d="M470 600L993 71L1503 240L975 771Z" fill="url(#top)" />
          <path d="M975 771L1503 240V1008L975 1537Z" fill="#ff7b80" />
          <path d="M975 771L487 605L403 588L325 592L262 618L200 668L160 740L140 820V930L160 1022L202 1125L258 1212L328 1285L408 1342L470 1368L975 1537Z" fill="#ff9a9c" />
          <g clip-path="url(#bore)">
            <rect x="160" y="620" width="790" height="880" fill="url(#lit)" />
            <path d="M160 680L210 745L245 800L290 865L340 935L410 1005L480 1060L570 1117L645 1150L944 1150V600H160Z" fill="url(#dim)" />
            <path d="M470 1333L944 853V1493Z" fill="url(#floor)" />
            <path d="M645 1153L773 1193L944 1493V853Z" fill="url(#floorDim)" />
          </g>
          <g class="edges">
            <path d="M944 797L480 641L388 624L320 632L257 667L207 722L178 797L168 885L178 985L207 1070L255 1160L318 1235L390 1297L470 1333L944 1493Z" />
            <path d="M975 771L487 605L403 588L325 592L262 618L200 668L160 740L140 820V930L160 1022L202 1125L258 1212L328 1285L408 1342L470 1368L975 1537Z" />
            <path d="M720 145L782 90L852 60L940 57L993 71L1503 240V1008L975 1537M975 771L1503 240M470 600L993 71M470 1333L944 853M915 789L944 803" />
          </g>
        </svg>
        <svg class="pointer" viewBox="0 0 40 52" aria-hidden="true">
          <path d="M0 11.500H20M10.500 1V20" stroke="#222" /><path d="M11 14V49L20 39.500L36 39Z" fill="#ffff00" stroke="#111" stroke-width="1.800" />
        </svg>
      </section>
    </main>

    <form class="cmdbar" @submit.prevent>
      <i class="grip"></i>
      <div class="combo">
        <input v-model="command" type="text" aria-label="Command">
        <button type="button" aria-label="History"><svg viewBox="0 0 12 8"><path d="M1 1.500L6 6.500L11 1.500" fill="none" stroke="#666" stroke-width="1.300" /></svg></button>
      </div>
      <div class="confirm">
        <button aria-label="Enter"><svg class="ent"><use href="#enter" /></svg></button>
        <button type="button" aria-label="Cancel"><svg><use href="#cancel" /></svg></button>
      </div>
    </form>

    <footer class="status">
      <p>Click a command or preselect assembly, part, workplane, face or edge. Hold SHIFT-key to select multiple items.</p>
      <div class="right">
        <svg class="ic"><use href="#bug" /></svg>
        <svg class="ic warn"><use href="#warn" /></svg>
        <span class="cell swatch"></span>
        <span class="cell path">/RedLens</span>
        <button class="word">Catch</button>
        <button class="word units">Units</button>
        <div class="pick">
          <select v-model="filter" aria-label="Selection filter"><option>All</option></select>
          <i class="caret"></i>
        </div>
        <div class="views">
          <button v-for="v in viewTools" :key="v.icon" :aria-label="v.name"><svg class="ic"><use :href="'#' + v.icon" /></svg></button>
        </div>
      </div>
    </footer>
  </div>
</template>

<style>
body { background: #fbfbfb; }
</style>

<style scoped>
.app {
  display: flex; flex-direction: column; min-height: 100vh;
  background: #fbfbfb; color: #484848;
  font: 14px/18px "Noto Sans", "Open Sans", sans-serif;
}
.app * { box-sizing: border-box; }
.sprite { position: absolute; width: 0; height: 0; }
button { padding: 0; border: 0; background: none; color: inherit; font: inherit; white-space: nowrap; }
svg { display: block; flex: none; }
h1, h2, p { margin: 0; }
.ic { width: 20px; height: 20px; }
.caret { flex: none; width: 0; height: 0; border: 4px solid transparent; border-top-color: #777; border-bottom: 0; }

.titlebar { display: flex; align-items: center; height: 31px; padding: 0 15px 0 3px; }
.logo { margin-top: -2px; }
.quick { display: flex; align-items: center; gap: 7px; height: 22px; margin: -4px 0 0 7px; padding-left: 5px; border-left: 1px solid #ddd; }
.quick button { display: flex; align-items: center; gap: 8px; height: 22px; }
.quick .ic { width: 20px; height: 19px; }
.quick .wide:nth-of-type(7) { gap: 0; margin-left: 2px; }
.quick .custom { margin-left: -4px; padding-left: 5px; border-left: 1px solid #ddd; }
.custom .caret { position: relative; }
.custom .caret::before { content: ""; position: absolute; left: -4px; top: -8px; width: 8px; height: 2px; background: #666; }
.titlebar h1 { flex: 1; text-align: center; font-size: 14px; font-weight: 700; line-height: 18px; margin-top: -2px; }
.winctl { display: flex; gap: 29px; }
.winctl svg, .docctl svg { width: 16px; height: 16px; }

.tabs { display: flex; align-items: stretch; height: 29px; padding-left: 1px; border-bottom: 1px solid #d0d2d4; }
.tab { border: 1px solid #d2d4d6; border-bottom: 0; border-left-width: 0; background: #eeeff1; color: #787878; font-weight: 600; }
.tab.file { width: 69px; margin-right: 11px; border-left-width: 1px; }
.tab:nth-of-type(2) { width: 99px; }
.tab:nth-of-type(3) { width: 98px; }
.tab:nth-of-type(4) { width: 83px; }
.tab:nth-of-type(5) { width: 125px; }
.tab:nth-of-type(6) { width: 91px; }
.tab:nth-of-type(7) { width: 66px; }
.tab:nth-of-type(8) { width: 120px; }
.tab.active { margin-bottom: -1px; border-left-width: 1px; border-radius: 4px 4px 0 0; background: #fbfbfb; color: #3c3c3c; font-weight: 700; }
.docctl { display: flex; align-items: center; gap: 8px; margin-left: auto; padding-right: 8px; }
.docctl .help { width: 20px; height: 20px; margin-left: 2px; border-radius: 50%; background: #333; color: #fff; font-size: 16px; font-weight: 700; line-height: 20px; }
.docctl .caret { margin-right: -2px; }

.ribbon { display: flex; height: 119px; padding-left: 1px; border-bottom: 1px solid #d0d2d4; }
.group { display: flex; flex-direction: column; flex: none; border-right: 1px solid #d8dadc; }
.group.new { width: 129px; }
.group.draw { width: 508px; }
.group.mod2d { width: 187px; }
.group.model { width: 258px; }
.group.mod3d { width: 229px; }
.group.eng { width: 112px; }
.group.util { width: 164px; }
.body { display: grid; flex: 1; padding: 4px 0 0 6px; }
.draw .body { grid-template-columns: 60px 70px 58px 48px 91px 118px 1fr; }
.mod2d .body { grid-template-columns: 96px 1fr; }
.model .body { grid-template-columns: 52px 97px 1fr; }
.mod3d .body { grid-template-columns: 54px 67px 1fr; }
.util .body { grid-template-columns: 45px 31px 33px 1fr; }
.big { display: flex; flex-direction: column; align-items: center; padding-top: 4px; }
.big svg { width: 40px; height: 40px; }
.big span { margin: 5px 0; }
.stack { display: flex; flex-direction: column; padding-left: 5px; }
.stack.divided { padding-left: 12px; border-left: 1px solid #e0e0e0; }
.cmd { display: flex; align-items: center; height: 28px; }
.cmd span { margin-left: 4px; }
.cmd .caret { margin-left: 6px; }
.group footer { display: flex; align-items: center; height: 27px; padding-right: 6px; border-top: 1px solid #d8dadc; background: #eeeff1; }
.group footer span { flex: 1; padding-right: 4px; text-align: center; white-space: nowrap; }
.group footer svg { width: 12px; height: 12px; }
.group.util footer, .group.util footer span { padding-right: 0; }

.work { display: flex; flex: 1; gap: 5px; margin-top: 4px; }
.browser { display: flex; flex-direction: column; width: 214px; border: 1px solid #cfd1d4; }
.phead { display: flex; gap: 9px; height: 28px; padding: 3px 6px 0 4px; }
.phead h2 { flex: 1; font-size: 14px; font-weight: 400; line-height: 18px; white-space: nowrap; }
.phead button { height: 12px; }
.phead svg { width: 12px; height: 12px; }
.ptabs { display: flex; height: 30px; border-bottom: 1px solid #cfd1d4; }
.ptabs button { width: 29px; height: 30px; padding: 0 4px; border: 1px solid #cfd1d4; border-width: 1px 1px 0 0; border-radius: 0 3px 0 0; background: #fbfbfb; }
.ptools { display: flex; align-items: center; height: 28px; padding: 0 6px 0 8px; border-bottom: 1px solid #cfd1d4; }
.ptools span { flex: 1; margin-left: 9px; color: #222; }
.ptools svg { width: 16px; height: 16px; }
.ptools button { display: flex; align-items: center; gap: 6px; }
.ptools .filter { margin-left: 4px; padding-left: 6px; border-left: 1px solid #e4e4e4; }
.tree { flex: 1; padding: 4px 0 0 8px; background: #fff; }
.root { display: flex; align-items: center; height: 20px; }
.root button { width: 12px; height: 12px; border: 1px solid #909090; border-radius: 2px; background: linear-gradient(#4a60a8, #4a60a8) center / 6px 1px no-repeat #f4f4f4; }
.root svg { width: 14px; height: 14px; margin: -6px 0 0 3px; }
.dots { width: 7px; margin-left: 1px; border-top: 1px dotted #888; }
.leaf { display: flex; align-items: center; height: 22px; margin-left: 31px; color: #111; font-weight: 700; }
.elbow { width: 14px; height: 14px; margin: -12px 4px 0 0; border: 1px dotted #888; border-width: 0 0 1px 1px; }
.leaf input { appearance: none; width: 14px; height: 14px; margin: 0; border: 1px solid #444; background: #fff; }
.leaf input:checked { background: linear-gradient(45deg, transparent 0 40%, #111 40% 58%, transparent 58%) 1px 4px / 5px 6px no-repeat, linear-gradient(135deg, transparent 0 40%, #111 40% 60%, transparent 60%) 4px 2px / 8px 8px no-repeat, #fff; }
.leaf svg { width: 18px; height: 18px; margin: 0 6px 0 23px; }
.leaf span { height: 19px; padding: 0 4px 0 2px; border-bottom: 2px solid #38e038; line-height: 18px; }

.viewport { position: relative; flex: 1; border: 1px solid #b4b6b8; border-right: 0; background: #fbfbfb; }
.solid { position: absolute; left: 400px; top: 56px; width: 860px; height: 740px; }
.edges path { fill: none; stroke: #10b464; stroke-width: 1px; vector-effect: non-scaling-stroke; }
.pointer { position: absolute; left: 78px; top: 100px; width: 40px; height: 52px; }

.cmdbar { display: flex; align-items: center; height: 46px; padding: 0 5px; }
.grip { width: 2px; height: 34px; margin-right: 4px; background: repeating-linear-gradient(#b4bccb 0 2px, transparent 2px 5px); }
.combo { display: flex; width: 439px; height: 30px; border: 1px solid #8c8c8c; border-radius: 2px; background: #fff; }
.combo input { flex: 1; min-width: 0; padding: 0 6px; border: 0; background: none; font: inherit; }
.combo button { width: 24px; padding-left: 6px; }
.combo svg { width: 12px; height: 8px; }
.confirm { display: flex; gap: 4px; height: 30px; margin-left: 1px; padding: 1px; background: #f1f1f1; }
.confirm button { display: grid; place-items: center; width: 30px; height: 28px; border-radius: 4px; background: #fafafa; }
.confirm svg { width: 18px; height: 20px; }
.confirm .ent { width: 26px; }

.status { display: flex; align-items: center; height: 29px; padding: 0 0 2px 11px; border-top: 2px solid #9a9a9a; background: #eeeff1; }
.status p { flex: 1; white-space: nowrap; }
.right { display: flex; align-items: center; height: 25px; padding: 0 6px 0 12px; border-left: 1px solid #dcdcdc; }
.warn { margin: 0 7px 0 13px; }
.cell { height: 25px; border: 1px solid #d8dadc; background: #fff; color: #222; line-height: 23px; }
.swatch { width: 22px; margin-right: 3px; }
.path { width: 75px; text-align: right; }
.word { width: 38px; margin-left: 7px; }
.units { margin: 0 16px 0 17px; }
.pick { position: relative; display: flex; align-items: center; padding-left: 3px; border-left: 1px solid #dcdcdc; }
.pick select { appearance: none; width: 138px; height: 25px; padding: 0 2px; border: 1px solid #d8dadc; border-radius: 0; background: #fff; color: #222; font: inherit; }
.pick .caret { position: absolute; right: 5px; top: 11px; }
.views { display: flex; gap: 13px; margin-left: 7px; }
</style>
